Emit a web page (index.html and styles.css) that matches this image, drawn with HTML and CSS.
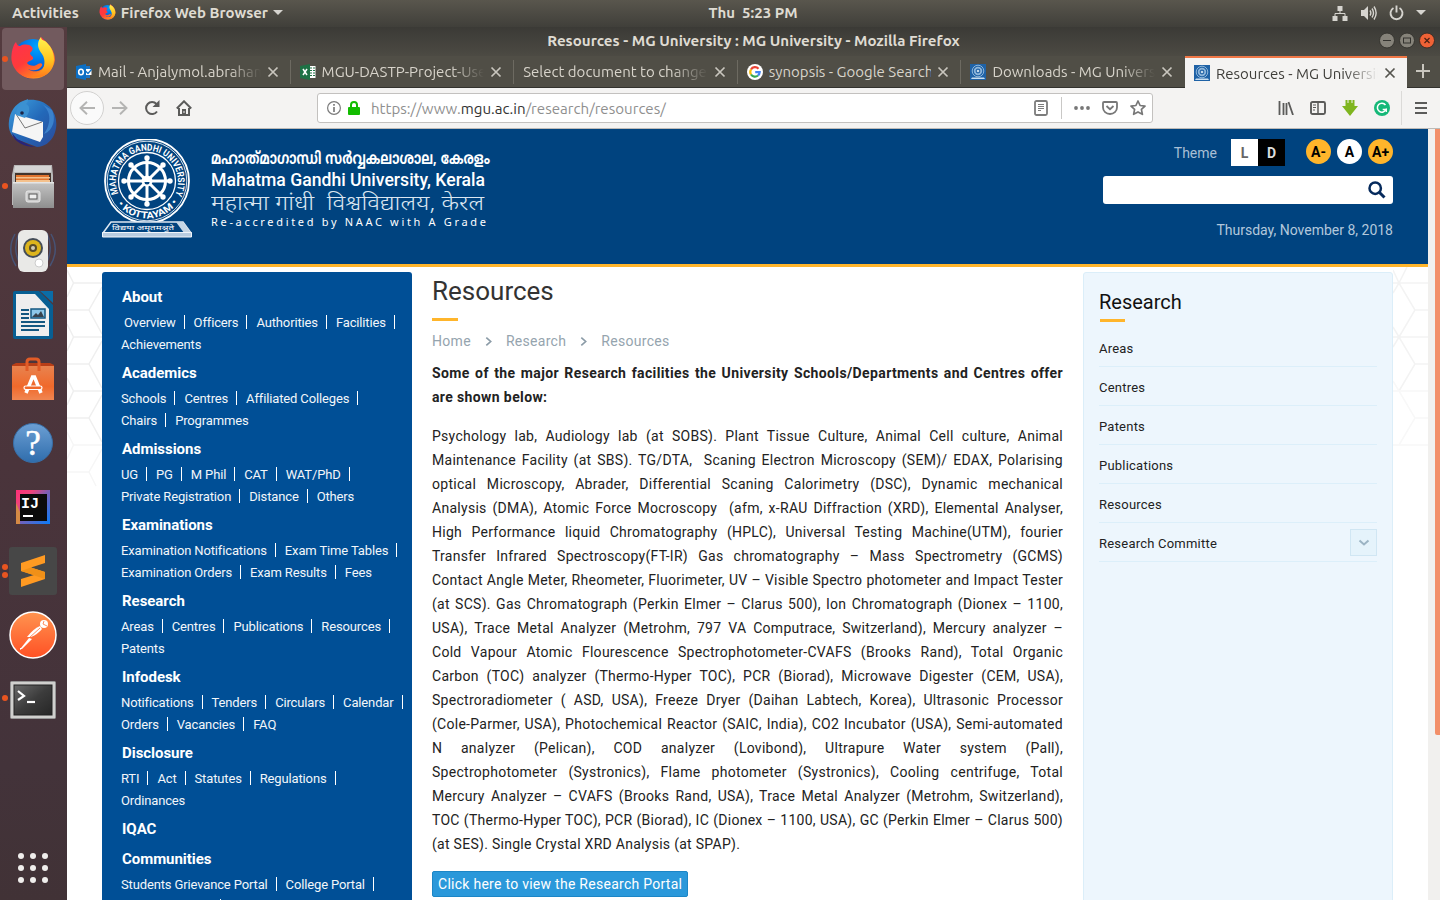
FILE: index.html
```html
<!DOCTYPE html>
<html lang="en">
<head>
<meta charset="utf-8">
<title>Resources - MG University : MG University</title>
<link rel="stylesheet" href="styles.css">
</head>
<body>
<svg class="defs" width="0" height="0">
  <defs>
    <linearGradient id="fxBody" x1="0" y1="0" x2="0.7" y2="1"><stop offset="0" stop-color="#ff2f52"/><stop offset=".55" stop-color="#ff3b3a"/><stop offset="1" stop-color="#ff9a1a"/></linearGradient>
    <linearGradient id="fxTail" x1="0" y1="0" x2="0" y2="1"><stop offset="0" stop-color="#fff44f"/><stop offset=".6" stop-color="#ffc21f"/><stop offset="1" stop-color="#ff7a1c"/></linearGradient>
    <radialGradient id="fxGlobe" cx=".6" cy=".2" r=".9"><stop offset="0" stop-color="#00a4ff"/><stop offset=".6" stop-color="#0060df"/><stop offset="1" stop-color="#1a2078"/></radialGradient>
    <linearGradient id="grey" x1="0" y1="0" x2="0" y2="1"><stop offset="0" stop-color="#c4c4c4"/><stop offset="1" stop-color="#8e8e8e"/></linearGradient>
    <linearGradient id="bag" x1="0" y1="0" x2="0" y2="1"><stop offset="0" stop-color="#e8834f"/><stop offset=".6" stop-color="#f0692b"/><stop offset="1" stop-color="#f08652"/></linearGradient>
    <linearGradient id="help" x1="0" y1="0" x2="0" y2="1"><stop offset="0" stop-color="#6c9fd4"/><stop offset="1" stop-color="#2f6dac"/></linearGradient>
    <linearGradient id="postman" x1="0" y1="0" x2="0" y2="1"><stop offset="0" stop-color="#ff9450"/><stop offset="1" stop-color="#ff5024"/></linearGradient>
    <linearGradient id="term" x1="0" y1="0" x2="1" y2="1"><stop offset="0" stop-color="#6a6a6a"/><stop offset=".5" stop-color="#3c3c3c"/><stop offset="1" stop-color="#262626"/></linearGradient>
    <linearGradient id="bird" x1="0" y1="0" x2="1" y2="1"><stop offset="0" stop-color="#3fa2e0"/><stop offset=".5" stop-color="#2368b8"/><stop offset="1" stop-color="#2a4a9a"/></linearGradient>
    <linearGradient id="ijg" x1="0" y1="0" x2="1" y2="1"><stop offset="0" stop-color="#fe2f78"/><stop offset=".25" stop-color="#f0437a"/><stop offset=".5" stop-color="#7b5fb5"/><stop offset="1" stop-color="#087cfa"/></linearGradient>
    <symbol id="firefox" viewBox="0 0 44 46">
      <circle cx="22" cy="23" r="20" fill="url(#fxGlobe)"/>
      <path d="M5 6c1 3 2 4 4 4 4-2 9-2 12 1 2 2-1 5-2 6 0 3 4 3 3 6-2 2-5 2-6 4 2 3 8 4 11 1 3-2 6 0 3 3-3 4-9 4-13 2 5 4 14 3 17-4 3-8 1-14-3-18-2-6-2-8-1-10 9 8 14 14 14 23A22 22 0 0 1 .5 24C0 17 2 9 5 6z" fill="url(#fxBody)"/>
      <path d="M30 1c-5 6-3 12 1 17 4 6 3 14-2 18-3 3-7 4-10 4 14 4 24-4 24-17 0-8-4-14-9-18-3-1-4-2-4-4z" fill="url(#fxTail)"/>
    </symbol>
    <symbol id="close" viewBox="0 0 12 12"><path d="M1.500 1.500l9 9M10.500 1.500l-9 9" fill="none" stroke="currentColor" stroke-width="1.700"/></symbol>
    <symbol id="mgu" viewBox="0 0 16 16"><rect width="16" height="16" fill="#1f62a6"/><g fill="none" stroke="#8db5da"><circle cx="8" cy="7" r="5.800"/><circle cx="8" cy="7" r="3.300" stroke-width="1.800"/></g><circle cx="8" cy="7" r="1.300" fill="#c3d8ea"/><path d="M2 13.500h12l1 1.500H1z" fill="#c9deef"/></symbol>
    <symbol id="chev" viewBox="0 0 8 12"><path d="M1.500 1.500L6.500 6l-5 4.500" fill="none" stroke="#8b9ba7" stroke-width="1.900"/></symbol>
  </defs>
</svg>

<div class="desktop">
  <header class="topbar">
    <div class="topbar-left">
      <span>Activities</span>
      <span class="app"><svg width="17" height="17"><use href="#firefox"/></svg><span class="app-name">Firefox Web Browser</span><i class="caret"></i></span>
    </div>
    <div class="clock">Thu&nbsp; 5:23 PM</div>
    <div class="tray">
      <svg width="16" height="16" viewBox="0 0 16 16"><path d="M5.500 1h5v5h-5zM.500 11h5v5h-5zM10.500 11h5v5h-5z" fill="#d6d4cf"/><path d="M8 6v2.500M3 11V8.500h10V11" fill="none" stroke="#d6d4cf"/></svg>
      <svg width="17" height="16" viewBox="0 0 17 16"><path d="M1 5h3l4-4v14l-4-4H1z" fill="#d6d4cf"/><g fill="none" stroke="#d6d4cf" stroke-width="1.400"><path d="M10 5.500q1.700 2.500 0 5M12 3.500q3 4.500 0 9M14 1.500q4.300 6.500 0 13"/></g></svg>
      <svg width="15" height="16" viewBox="0 0 15 16"><path d="M4.500 3a6 6 0 1 0 6 0M7.500.5v7" fill="none" stroke="#d6d4cf" stroke-width="1.900"/></svg>
      <i class="caret"></i>
    </div>
  </header>

  <div class="below">
    <nav class="dock">
      <div class="app-icon active run1"><svg width="44" height="46"><use href="#firefox"/></svg></div>
      <div class="app-icon"><svg width="50" height="48" viewBox="0 0 50 48"><path d="M15 2C23-1 35 1 42 8c7 8 8 19 4 28-3 7-10 12-17 12L8 40C2 36 0 29 1 22 2 13 7 5 15 2z" fill="url(#bird)"/><path d="M4 34l5 6 12 6 6 2c-9 0-21-4-23-14z" fill="#27247a"/><path d="M7 15l28 8 0 15-3 5L4 33z" fill="#f5f5f5"/><path d="M8 15l9 14 17-6" fill="none" stroke="#555" stroke-width=".8"/><path d="M8 16C8 7 14 2 20 0c0 3-1 4-2 5 5 2 4 9-1 14z" fill="#3b91d2"/><circle cx="14" cy="14" r="1.800" fill="#1c2547"/><path d="M34 5c10 8 9 20 2 30 10-4 12-16 8-24" fill="#3b82cc"/></svg></div>
      <div class="app-icon run1"><svg width="44" height="46" viewBox="0 0 44 46"><path d="M3 1h38l1 10v30H1V11z" fill="#b9b9b9"/><path d="M4 2h36v6H3z" fill="#d5d5d5"/><path d="M4 9h36v11H4z" fill="#43342c"/><path d="M5 11h33v8H5z" fill="#e0742f"/><path d="M5 13h34v1.500H5zM5 16h34v3H5z" fill="#f4c18d"/><path d="M2 18h41v26H2z" fill="url(#grey)"/><path d="M2 18h41v1.500H2z" fill="#e5e5e5"/><rect x="15" y="27" width="14" height="11" rx="2" fill="#ccc" stroke="#e8e8e8"/><rect x="18" y="30" width="8" height="5" fill="#eee" stroke="#555"/></svg></div>
      <div class="app-icon"><svg width="48" height="44" viewBox="0 0 48 44"><path d="M6 5Q-3 21 7 37M10 4Q3 20 11 35M42 5q9 16-1 32M38 4q7 16-1 31" fill="none" stroke="#475375" stroke-width="1.500"/><rect x="9" y="1" width="30" height="42" rx="6" fill="#e9e9e7"/><circle cx="24" cy="19" r="10" fill="#444d58"/><circle cx="24" cy="19" r="8" fill="#dcb41c"/><circle cx="24" cy="19" r="4" fill="#574b2a"/><circle cx="24" cy="19" r="2" fill="#d0cbb5"/><circle cx="30" cy="34" r="4" fill="#fff" stroke="#ccc"/></svg></div>
      <div class="app-icon"><svg width="42" height="50" viewBox="0 0 42 50"><path d="M3 1h24l14 14v32q0 2-2 2H3q-2 0-2-2V3q0-2 2-2z" fill="#075f93"/><path d="M4 4h19l14 15v27H4z" fill="#eee"/><path d="M28 1h13v12z" fill="#0b6da7"/><path d="M9 20h8M9 24h8M9 28h8M9 32h24M9 36h24M9 40h18" stroke="#135780" stroke-width="2"/><rect x="19" y="19" width="14" height="9" fill="#8dc7e8" stroke="#135780" stroke-width="1.500"/><path d="M20 27l4-4 2 2 3-4 3 6z" fill="#38434d"/></svg></div>
      <div class="app-icon"><svg width="44" height="44" viewBox="0 0 44 44"><path d="M1 8l4-2h34l4 2v4H1z" fill="#b83e17"/><path d="M1 9h42v34H1z" fill="url(#bag)"/><path d="M16 14V5q0-3 3-3h6q3 0 3 3v9" fill="none" stroke="#e25c27" stroke-width="3"/><path d="M15 36l6.500-16h2L30 36" fill="none" stroke="#fff" stroke-width="3.500"/><rect x="13" y="29" width="18" height="3.500" rx="1.700" fill="#f0692b" stroke="#fff" stroke-width="1.200"/></svg></div>
      <div class="app-icon"><svg width="42" height="42" viewBox="0 0 42 42"><circle cx="21" cy="21" r="19.500" fill="url(#help)" stroke="#386fa8"/><text x="21" y="33" text-anchor="middle" class="q">?</text></svg></div>
      <div class="app-icon"><svg width="34" height="34" viewBox="0 0 34 34"><rect width="34" height="34" fill="url(#ijg)"/><path d="M0 13l4 9v12H0z" fill="#d58a45"/><rect x="4" y="4" width="27" height="27" fill="#0b0b0b"/><text x="5" y="18" class="ij">IJ</text><path d="M7 25h10v2H7z" fill="#fff"/></svg></div>
      <div class="app-icon run2"><svg width="48" height="48" viewBox="0 0 48 48"><rect width="48" height="48" rx="3" fill="#474747"/><path d="M12 16l24-8v8l-14 4.500L36 25v7l-24 8v-8l13-4-13-4z" fill="#ff9a22"/><path d="M22 20.500L36 25v7L12 24z" fill="#f09018"/></svg></div>
      <div class="app-icon"><svg width="48" height="48" viewBox="0 0 48 48"><circle cx="24" cy="24" r="23" fill="url(#postman)" stroke="#fff" stroke-width="1.500"/><circle cx="35" cy="13" r="4" fill="#fff"/><path d="M31 15q-7 3-13 11l4 0q7-3 11-8z" fill="#fff"/><path d="M20 27l3 1-10 10-1-1zM11 37l3 0-3 2z" fill="#fff"/><path d="M31 17L20 27M35 10l-1 3 4 2" stroke="#ff7038" stroke-width=".8" fill="none"/></svg></div>
      <div class="app-icon run1 low"><svg width="46" height="38" viewBox="0 0 46 38"><rect x=".5" y=".5" width="45" height="37" rx="1" fill="#d0d0ce" stroke="#969696"/><rect x="4" y="4" width="38" height="30" fill="url(#term)" stroke="#222"/><path d="M8 10l6 5-6 4" fill="none" stroke="#fff" stroke-width="2.200"/><path d="M17 21h8" stroke="#fff" stroke-width="2.200"/></svg></div>
      <div class="apps-grid"><i></i><i></i><i></i><i></i><i></i><i></i><i></i><i></i><i></i></div>
    </nav>

    <section class="window">
      <div class="titlebar">
        <span class="title">Resources - MG University : MG University - Mozilla Firefox</span>
        <div class="wm">
          <svg width="16" height="17" viewBox="0 0 16 17"><circle cx="8" cy="8.500" r="7.500" fill="#86837a" stroke="#35342f"/><path d="M4 8.500h8" stroke="#33322e"/></svg>
          <svg width="16" height="17" viewBox="0 0 16 17"><circle cx="8" cy="8.500" r="7.500" fill="#86837a" stroke="#35342f"/><rect x="4.500" y="6" width="7" height="5" fill="none" stroke="#33322e"/></svg>
          <svg width="16" height="17" viewBox="0 0 16 17"><circle cx="8" cy="8.500" r="7.500" fill="#ef6236" stroke="#3b2d26"/><path d="M5.500 6l5 5m0-5l-5 5" stroke="#4a2114" stroke-width="1.200"/></svg>
        </div>
      </div>
      <div class="tabs">
        <div class="tab"><svg class="fav" width="16" height="16" viewBox="0 0 16 16"><path d="M5 2h9v12H5z" fill="#1b74c5"/><path d="M9 5h6.500v6H9z" fill="#fff"/><path d="M9.500 7l2.500 2.500L16 5" fill="none" stroke="#1072c6" stroke-width="1.400"/><path d="M0 2l10-2v16L0 14z" fill="#0b6fc4"/><ellipse cx="5" cy="8" rx="2.300" ry="2.800" fill="none" stroke="#fff" stroke-width="1.600"/></svg><span class="label">Mail - Anjalymol.abraham</span><svg class="x" width="12" height="12"><use href="#close"/></svg></div>
        <div class="tab"><svg class="fav" width="16" height="16" viewBox="0 0 16 16"><path d="M8 2h7.500v12H8z" fill="#fff"/><path d="M10 4h2m1 0h2M10 6.500h2m1 0h2M10 9h2m1 0h2M10 11.500h2m1 0h2" stroke="#207346" stroke-width="1.200"/><path d="M0 2l10-2v16L0 14z" fill="#1e7145"/><path d="M3 5l4 6M7 5l-4 6" stroke="#fff" stroke-width="1.500"/></svg><span class="label">MGU-DASTP-Project-User</span><svg class="x" width="12" height="12"><use href="#close"/></svg></div>
        <div class="tab"><span class="label">Select document to change |</span><svg class="x" width="12" height="12"><use href="#close"/></svg></div>
        <div class="tab"><svg class="fav" width="16" height="16" viewBox="0 0 16 16"><circle cx="8" cy="8" r="8" fill="#fff"/><g fill="none" stroke-width="2.200"><path d="M4 5.500A4.700 4.700 0 0 1 11.500 4.700" stroke="#ea4335"/><path d="M4 5.500a4.700 4.700 0 0 0 0 5" stroke="#fbbc05"/><path d="M4 10.500a4.700 4.700 0 0 0 7 1" stroke="#34a853"/><path d="M11 11.500a4.700 4.700 0 0 0 1.700-3.300H8.200" stroke="#4285f4"/></g></svg><span class="label whole">synopsis - Google Search</span><svg class="x" width="12" height="12"><use href="#close"/></svg></div>
        <div class="tab last"><svg class="fav" width="16" height="16"><use href="#mgu"/></svg><span class="label">Downloads - MG Universit</span><svg class="x" width="12" height="12"><use href="#close"/></svg></div>
        <div class="tab current"><svg class="fav" width="16" height="16"><use href="#mgu"/></svg><span class="label">Resources - MG Universit</span><svg class="x" width="12" height="12"><use href="#close"/></svg></div>
        <svg class="plus" width="14" height="14" viewBox="0 0 14 14"><path d="M7 0v14M0 7h14" stroke="#c9c6be" stroke-width="2"/></svg>
      </div>
      <div class="toolbar">
        <span class="back"><svg width="16" height="14" viewBox="0 0 16 14"><path d="M16 7H1.500M8 .8L1.500 7 8 13.200" fill="none" stroke="#b4b4b3" stroke-width="1.900"/></svg></span>
        <svg class="fwd" width="16" height="14" viewBox="0 0 16 14"><path d="M0 7h14.500M8 .8L14.500 7 8 13.200" fill="none" stroke="#b4b4b3" stroke-width="1.900"/></svg>
        <svg class="reload" width="16" height="16" viewBox="0 0 16 16"><path d="M13 11.500A6 6 0 1 1 12.500 4" fill="none" stroke="#5b5b5a" stroke-width="2"/><path d="M15.500 0v7h-7z" fill="#5b5b5a"/></svg>
        <svg class="home" width="16" height="16" viewBox="0 0 16 16"><path d="M.8 8.500L8 1.300l7.200 7.200M3 8v7h10V8" fill="none" stroke="#5b5b5a" stroke-width="2"/><path d="M6 9h4v6H6z" fill="#5b5b5a"/><path d="M7.500 11h1v2h-1z" fill="#eee"/></svg>
        <div class="urlbar">
          <svg width="14" height="14" viewBox="0 0 14 14"><circle cx="7" cy="7" r="6.400" fill="none" stroke="#7b7b7b" stroke-width="1.200"/><path d="M7 6v5M7 3v1.800" stroke="#7b7b7b" stroke-width="1.700"/></svg>
          <svg class="lock" width="12" height="14" viewBox="0 0 12 14"><path d="M3 7V4a3 3 0 0 1 6 0v3" fill="none" stroke="#12bc00" stroke-width="2"/><rect y="6" width="12" height="8" rx="1" fill="#12bc00"/></svg>
          <span class="url">https://www.<b>mgu.ac.in</b>/research/resources/</span>
          <span class="url-actions">
            <svg width="14" height="16" viewBox="0 0 14 16"><rect x="1" y="1" width="12" height="14" rx="1.500" fill="none" stroke="#7c7c7c" stroke-width="1.800"/><path d="M4 4.500h6M4 6.500h6M4 8.500h6M4 10.500h3" stroke="#7c7c7c"/></svg>
            <i class="vsep"></i>
            <svg width="16" height="4" viewBox="0 0 16 4"><g fill="#777"><circle cx="2" cy="2" r="1.900"/><circle cx="8" cy="2" r="1.900"/><circle cx="14" cy="2" r="1.900"/></g></svg>
            <svg class="pocket" width="16" height="14" viewBox="0 0 16 14"><path d="M2 1h12q1 0 1 1v4.500a7 6.500 0 0 1-14 0V2q0-1 1-1z" fill="none" stroke="#777" stroke-width="1.800"/><path d="M4.500 5L8 8.200 11.500 5" fill="none" stroke="#777" stroke-width="1.800"/></svg>
            <svg class="star" width="16" height="16" viewBox="0 0 16 16"><path d="M8 1l2.100 4.500 4.900.6-3.600 3.300 1 4.900L8 11.900l-4.400 2.400 1-4.900L1 6.100l4.900-.6z" fill="none" stroke="#777" stroke-width="1.700" stroke-linejoin="round"/></svg>
          </span>
        </div>
        <div class="tools">
          <svg width="16" height="14" viewBox="0 0 16 14"><path d="M1.500 0v14M5.500 2v12M8.500 2v12M10.500 1l4.500 13" fill="none" stroke="#5b5b5a" stroke-width="1.800"/></svg>
          <svg width="16" height="14" viewBox="0 0 16 14"><rect x="1" y="1" width="14" height="12" rx="1.500" fill="none" stroke="#5b5b5a" stroke-width="1.900"/><path d="M8 1v12" stroke="#5b5b5a" stroke-width="1.500"/><path d="M3 4h3M3 6.500h3M3 9h2" stroke="#5b5b5a"/></svg>
          <svg width="16" height="16" viewBox="0 0 16 16"><path d="M3.500 0h2v3h1V0h3v3h1V0h2v6H16l-8 10L0 6h3.500z" fill="#7fb51f"/></svg>
          <svg width="16" height="16" viewBox="0 0 16 16"><circle cx="8" cy="8" r="8" fill="#15b878"/><path d="M11.500 5A4.500 4.500 0 1 0 12 9.500H8.700" fill="none" stroke="#fff" stroke-width="1.500"/><path d="M12.300 8.500v3.500" stroke="#fff" stroke-width="1.300"/></svg>
        </div>
        <span class="menu"><i></i><i></i><i></i></span>
      </div>

      <div class="viewport">
        <div class="page">
          <header class="site-head">
            <div class="brand">
              <svg class="emblem" width="90" height="99" viewBox="0 0 90 99">
                <defs><path id="arcTop" d="M16.800 55.500A31 31 0 1 1 73.200 55.500"/><path id="arcBot" d="M10.500 57A37.700 37.700 0 0 0 79.500 57"/></defs>
                <circle cx="45" cy="42" r="42" fill="none" stroke="#fff" stroke-width="1.800"/>
                <circle cx="45" cy="42" r="39.800" fill="none" stroke="#d3dfeb" stroke-width="1"/>
                <circle cx="45" cy="42" r="28.500" fill="none" stroke="#fff" stroke-width="1.300"/>
                <text class="ring"><textPath href="#arcTop" textLength="123" startOffset="1" lengthAdjust="spacingAndGlyphs">MAHATMA GANDHI UNIVERSITY</textPath></text>
                <text class="ring"><textPath href="#arcBot" textLength="70" startOffset="9.500" lengthAdjust="spacingAndGlyphs">• KOTTAYAM •</textPath></text>
                <g stroke="#fff" fill="none"><circle cx="45" cy="42" r="18.500" stroke-width="3"/><path d="M45 18v48M21 42h48M28 25l34 34M62 25L28 59" stroke-width="3"/></g>
                <g fill="#fff"><circle cx="45" cy="19" r="2.700"/><circle cx="45" cy="65" r="2.700"/><circle cx="22" cy="42" r="2.700"/><circle cx="68" cy="42" r="2.700"/><circle cx="29" cy="26" r="2.700"/><circle cx="61" cy="26" r="2.700"/><circle cx="29" cy="58" r="2.700"/><circle cx="61" cy="58" r="2.700"/><circle cx="45" cy="42" r="5.500"/></g>
                <path d="M42.500 43a2.500 2.500 0 0 0 5 0z" fill="#00437f"/>
                <path d="M9 83h72l8 11H1z" fill="#00437f" stroke="#dde8f2" stroke-width="1.500"/><path d="M74 83h7l8 11h-7z" fill="#c6d6e6"/>
                <path d="M.5 93.500h89V98H.5z" fill="#b8cce0" stroke="#f0f5fa" stroke-width="1"/>
                <text x="10" y="90.500" class="motto" textLength="62" lengthAdjust="spacingAndGlyphs">विद्यया अमृतमश्नुते</text>
              </svg>
              <svg class="wordmark" width="300" height="92" viewBox="0 0 300 92">
                <text x="0" y="25" class="ml" textLength="279" lengthAdjust="spacingAndGlyphs">മഹാത്&zwnj;മാഗാന്ധി സർവ്വകലാശാല, കേരളം</text>
                <text x="0" y="47" class="en" textLength="274" lengthAdjust="spacingAndGlyphs">Mahatma Gandhi University, Kerala</text>
                <text x="0" y="71" class="hi" textLength="273" lengthAdjust="spacingAndGlyphs" xml:space="preserve">महात्मा गांधी  विश्वविद्यालय, केरल</text>
                <text x="0" y="87" class="naac" textLength="275">Re-accredited by NAAC with A Grade</text>
              </svg>
            </div>
            <div class="head-tools">
              <div class="theme-row"><span class="theme">Theme</span><span class="sw light">L</span><span class="sw dark">D</span><span class="rnd">A-</span><span class="rnd white">A</span><span class="rnd">A+</span></div>
              <div class="search"><svg width="18" height="18" viewBox="0 0 18 18"><circle cx="7.200" cy="7.200" r="5.700" fill="none" stroke="#062a5c" stroke-width="2.500"/><path d="M11.500 11.500l5 5" stroke="#062a5c" stroke-width="3"/></svg></div>
              <div class="date">Thursday, November 8, 2018</div>
            </div>
          </header>

          <div class="columns">
            <svg class="gutter" width="35" height="240" viewBox="0 0 35 240"><g fill="none" stroke="#efefef" stroke-width="1.500"><path d="M0 3l6.500 13L0 30M6.500 16H35M0 43h22M35 20L22 43l13 24M0 57l6.500 13L0 84M6.500 70H35M0 97h22M35 74L22 97l13 24M0 111l6.500 13L0 138M6.500 124H35M0 151h22M35 128l-13 23 13 24"/><path stroke="#f6f6f6" d="M0 165l6.500 13L0 192M6.500 178H35M0 205h22M35 182l-13 23 7 14"/></g></svg>
            <aside class="left">
              <h3>About</h3>
              <div class="links"><p class="ind"><a>Overview</a><a>Officers</a><a>Authorities</a><a>Facilities</a></p><p><a>Achievements</a></p></div>
              <h3>Academics</h3>
              <div class="links"><p><a>Schools</a><a>Centres</a><a>Affiliated Colleges</a></p><p><a>Chairs</a><a>Programmes</a></p></div>
              <h3>Admissions</h3>
              <div class="links"><p><a>UG</a><a>PG</a><a>M Phil</a><a>CAT</a><a>WAT/PhD</a></p><p><a>Private Registration</a><a>Distance</a><a>Others</a></p></div>
              <h3>Examinations</h3>
              <div class="links"><p><a>Examination Notifications</a><a>Exam Time Tables</a></p><p><a>Examination Orders</a><a>Exam Results</a><a>Fees</a></p></div>
              <h3>Research</h3>
              <div class="links"><p><a>Areas</a><a>Centres</a><a>Publications</a><a>Resources</a></p><p><a>Patents</a></p></div>
              <h3>Infodesk</h3>
              <div class="links"><p><a>Notifications</a><a>Tenders</a><a>Circulars</a><a>Calendar</a></p><p><a>Orders</a><a>Vacancies</a><a>FAQ</a></p></div>
              <h3>Disclosure</h3>
              <div class="links"><p><a>RTI</a><a>Act</a><a>Statutes</a><a>Regulations</a></p><p><a>Ordinances</a></p></div>
              <h3>IQAC</h3>
              <h3>Communities</h3>
              <div class="links"><p><a>Students Grievance Portal</a><a>College Portal</a></p><p><a class="blank"></a></p><p></p></div>
            </aside>
            <main class="main">
              <h1>Resources</h1>
              <i class="rule"></i>
              <div class="crumbs"><span>Home</span><svg width="7" height="11"><use href="#chev"/></svg><span>Research</span><svg width="7" height="11"><use href="#chev"/></svg><span>Resources</span></div>
              <div class="para lead"><p>Some of the major Research facilities the University Schools/Departments and Centres offer</p><p class="end">are shown below:</p></div>
              <div class="para">
                <p>Psychology lab, Audiology lab (at SOBS). Plant Tissue Culture, Animal Cell culture, Animal</p>
                <p>Maintenance Facility (at SBS). TG/DTA,&nbsp; Scaning Electron Microscopy (SEM)/ EDAX, Polarising</p>
                <p>optical Microscopy, Abrader, Differential Scaning Calorimetry (DSC), Dynamic mechanical</p>
                <p>Analysis (DMA), Atomic Force Mocroscopy&nbsp; (afm, x-RAU Diffraction (XRD), Elemental Analyser,</p>
                <p>High Performance liquid Chromatography (HPLC), Universal Testing Machine(UTM), fourier</p>
                <p>Transfer Infrared Spectroscopy(FT-IR) Gas chromatography – Mass Spectrometry (GCMS)</p>
                <p class="tight">Contact Angle Meter, Rheometer, Fluorimeter, UV – Visible Spectro photometer and Impact Tester</p>
                <p>(at SCS). Gas Chromatograph (Perkin Elmer – Clarus 500), Ion Chromatograph (Dionex – 1100,</p>
                <p>USA), Trace Metal Analyzer (Metrohm, 797 VA Computrace, Switzerland), Mercury analyzer –</p>
                <p>Cold Vapour Atomic Flourescence Spectrophotometer-CVAFS (Brooks Rand), Total Organic</p>
                <p>Carbon (TOC) analyzer (Thermo-Hyper TOC), PCR (Biorad), Microwave Digester (CEM, USA),</p>
                <p>Spectroradiometer ( ASD, USA), Freeze Dryer (Daihan Labtech, Korea), Ultrasonic Processor</p>
                <p>(Cole-Parmer, USA), Photochemical Reactor (SAIC, India), CO2 Incubator (USA), Semi-automated</p>
                <p>N analyzer (Pelican), COD analyzer (Lovibond), Ultrapure Water system (Pall),</p>
                <p>Spectrophotometer (Systronics), Flame photometer (Systronics), Cooling centrifuge, Total</p>
                <p>Mercury Analyzer – CVAFS (Brooks Rand, USA), Trace Metal Analyzer (Metrohm, Switzerland),</p>
                <p>TOC (Thermo-Hyper TOC), PCR (Biorad), IC (Dionex – 1100, USA), GC (Perkin Elmer – Clarus 500)</p>
                <p class="end">(at SES). Single Crystal XRD Analysis (at SPAP).</p>
              </div>
              <a class="btn">Click here to view the Research Portal</a>
            </main>
            <aside class="right">
              <h2>Research</h2>
              <i class="rule"></i>
              <ul><li>Areas</li><li>Centres</li><li>Patents</li><li>Publications</li><li>Resources</li><li>Research Committe<span class="toggle"><svg width="12" height="8" viewBox="0 0 12 8"><path d="M1.500 1.500L6 5.500l4.500-4" fill="none" stroke="#9cb4c4" stroke-width="2"/></svg></span></li></ul>
            </aside>
            <svg class="gutter" width="35" height="240" viewBox="0 0 35 240"><g fill="none" stroke="#f3f3f3" stroke-width="1.500"><path d="M0 16h35M0 3l6 13 8-16M0 26l6-10 16 27L6 70M22 43h13M0 70h35M0 80l6-10 16 27-16 27M22 97h13M0 60l6 10"/><path stroke="#f8f8f8" d="M0 124h35M0 114l6 10 16 27-16 27M22 151h13M0 178h35"/></g></svg>
          </div>
        </div>
        <div class="scroll"><i></i></div>
      </div>
    </section>
  </div>
</div>
</body>
</html>
```

FILE: styles.css
```css
* { box-sizing: border-box; }
body { margin: 0; font-family: Roboto, "Liberation Sans", sans-serif; overflow: hidden; }
h1, h2, h3, p, ul { margin: 0; padding: 0; }
svg { display: block; flex: none; }
i { display: block; flex: none; }
.defs { position: absolute; }

.desktop { width: 1440px; height: 900px; display: flex; flex-direction: column; overflow: hidden; }
.topbar, .titlebar, .tabs, .url { font-family: Ubuntu, "Noto Sans", "Open Sans", sans-serif; }

/* system bar */
.topbar { height: 27px; flex: none; display: grid; grid-template-columns: 703px 100px 1fr; align-items: center; background: linear-gradient(#59564d, #403f3a); color: #dfdbd2; font-size: 15px; font-weight: 600; padding-bottom: 2px; }
.topbar-left { display: flex; align-items: center; padding-left: 12px; gap: 20px; }
.app { display: flex; align-items: center; gap: 5px; }
.caret { border: 5px solid transparent; border-top-color: #d6d4cf; border-bottom: 0; }
.clock { text-align: center; white-space: nowrap; }
.tray { display: flex; align-items: center; justify-content: flex-end; gap: 12px; padding-right: 14px; }

.below { flex: 1; display: flex; min-height: 0; }

/* dock */
.dock { width: 67px; flex: none; position: relative; background: linear-gradient(#543b3f, #4a343b 50%, #43333a 85%, #413236); padding-top: 1px; }
.app-icon { height: 64px; margin-left: 2px; width: 62px; display: flex; align-items: center; justify-content: center; position: relative; }
.app-icon.active { height: 62px; background: #725a5e; border-radius: 4px; margin-bottom: 1px; }
.app-icon.low { padding-top: 2px; }
.run1::before, .run2::before { content: ""; position: absolute; left: 0; top: 28px; width: 6px; height: 6px; border-radius: 50%; background: #e95420; }
.run2::before { box-shadow: 0 8px #e95420; top: 25px; }
.q { font: 35px "Liberation Serif", serif; fill: #fff; stroke: #fff; stroke-width: .5px; }
.ij { font: bold 15px "Liberation Mono", monospace; fill: #fff; }
.apps-grid { position: absolute; left: 18px; bottom: 17px; display: grid; grid-template-columns: repeat(3, 6px); gap: 6px; }
.apps-grid i { width: 6px; height: 6px; border-radius: 50%; background: #f0eeec; }

/* browser chrome */
.window { flex: 1; min-width: 0; display: flex; flex-direction: column; }
.titlebar { height: 29px; flex: none; position: relative; display: flex; align-items: center; justify-content: center; background: linear-gradient(#3b3a36, #4c4a43); color: #dfdbd2; font-size: 15.100px; font-weight: 600; white-space: nowrap; padding-bottom: 2px; }
.wm { position: absolute; right: 5px; top: 5px; display: flex; gap: 4px; }
.tabs { height: 32px; flex: none; display: flex; background: #504e46; border-bottom: 1px solid #33322e; color: #d8d4cb; font-size: 15px; }
.tab { width: 223.600px; flex: none; display: flex; align-items: center; padding-left: 9px; position: relative; }
.tab:not(.last):not(.current)::after { content: ""; position: absolute; right: 0; top: 4px; bottom: 3px; width: 1px; background: #6d6a61; }
.tab .fav { margin-right: 6px; }
.label { flex: 1; white-space: nowrap; overflow: hidden; -webkit-mask: linear-gradient(to right, #000 80%, transparent); }
.tab .x { margin: 0 12px 0 6px; color: #c9c6be; }
.label.whole { -webkit-mask: none; }
.tab.current { width: 222.200px; height: 32px; background: #f4f3f2; color: #3f3e3a; border-top: 2px solid #f07746; }
.tab.current .x { color: #55544f; margin-right: 11px; }
.plus { margin: 8px 0 0 9px; }
.toolbar { height: 41px; flex: none; display: flex; align-items: center; background: #f4f3f2; border-bottom: 1px solid #bdbab7; padding-left: 3px; }
.back { width: 34px; height: 34px; border-radius: 50%; border: 1px solid #d2d1d0; background: #fafafa; display: flex; align-items: center; justify-content: center; }
.fwd { margin-left: 8px; }
.reload { margin-left: 16px; }
.home { margin-left: 16px; }
.urlbar { margin-left: 125px; width: 836px; height: 30px; border: 1px solid #c3c1bf; border-radius: 3px; background: #fff; display: flex; align-items: center; padding-left: 9px; }
.lock { margin: 0 11px 0 7px; }
.url { font-size: 15.100px; color: #8f8f8f; flex: 1; }
.url b { font-weight: 400; color: #333; }
.url-actions { display: flex; align-items: center; padding-right: 6px; }
.vsep { width: 1px; height: 22px; background: #c9c8c6; margin: 0 12px 0 13px; }
.pocket { margin: 0 12px; }
.tools { display: flex; align-items: center; gap: 16px; margin-left: 125px; }
.menu { margin-left: 11px; height: 34px; border-left: 1px solid #dbdad8; padding: 11px 0 0 13px; display: flex; flex-direction: column; gap: 3px; }
.menu i { width: 12px; height: 2px; background: #5b5b5a; }

/* page */
.viewport { flex: 1; min-height: 0; display: flex; }
.page { width: 1361px; overflow: hidden; background: #fff; }
.scroll { width: 12px; background: #f1f0ee; padding-left: 7px; }
.scroll i { height: 606px; background: #f28f69; border-radius: 0 0 0 2px; }
.site-head { height: 138px; background: #00437f; border-bottom: 3px solid #ffb52b; padding: 10px 35px 0; display: flex; justify-content: space-between; }
.brand { display: flex; gap: 19px; }
.ring { font: bold 9.500px Roboto, sans-serif; fill: #fff; }
.motto { font: 7px "Noto Sans", "Noto Sans Devanagari", sans-serif; fill: #fff; }
.ml { font: bold 16.500px "Noto Sans Malayalam", "Noto Sans", sans-serif; fill: #fff; }
.en { font: 500 18px Roboto, sans-serif; fill: #fff; }
.hi { font: 300 20px "Noto Sans Devanagari", "Noto Sans", sans-serif; fill: #dbe6f1; }
.naac { font: 11px "Noto Sans", sans-serif; fill: #fff; }
.head-tools { width: 290px; }
.theme-row { height: 27px; display: flex; align-items: center; justify-content: flex-end; font-size: 14px; }
.theme { color: #a9bfd5; margin-right: 14px; }
.sw { width: 27px; height: 27px; line-height: 28px; text-align: center; font-weight: 700; }
.light { background: #fff; color: #666; }
.dark { background: #000; color: #ddd; margin-right: 21px; }
.rnd { width: 25px; height: 25px; line-height: 26px; margin-top: -2px; border-radius: 50%; background: #ffb52b; color: #000; text-align: center; font-weight: 700; }
.rnd.white { background: #fff; margin-left: 6px; margin-right: 6px; }
.search { height: 28px; margin-top: 10px; border-radius: 3px; background: #fff; display: flex; align-items: center; justify-content: flex-end; padding-right: 7px; }
.date { margin-top: 18px; line-height: 16px; text-align: right; font-size: 14px; color: #b3c8dc; }

.columns { display: grid; grid-template-columns: 35px 310px 671px 310px 35px; height: 640px; }
.left { margin-top: 5px; background: #004f96; border-radius: 3px 3px 0 0; padding: 10px 0 0 19px; color: #f2f6fa; }
.left h3 { font-size: 15px; font-weight: 700; line-height: 30px; padding-left: 1px; color: #fff; letter-spacing: -.04px; }
.links { margin-top: -1px; margin-bottom: 3px; letter-spacing: -.14px; }
.links p { display: flex; height: 22px; align-items: center; font-size: 13px; white-space: nowrap; }
.links .ind { padding-left: 3px; }
.links a { display: flex; align-items: center; }
.links a::after { content: ""; width: 1px; height: 14px; background: #fff; margin: 0 9px 0 8px; }
.links p:last-child a:last-child::after { display: none; }
.links .blank { padding-left: 91px; }

.main { padding: 5px 20px 0; color: #222; }
.main h1 { font-size: 26px; font-weight: 400; line-height: 38px; color: #333; }
.rule { width: 26px; height: 3px; background: #ffb52b; }
.main .rule { margin-top: 8px; }
.crumbs { display: flex; align-items: center; height: 24px; margin-top: 8px; font-size: 14px; letter-spacing: .3px; color: #95a4ae; gap: 14px; }
.para { font-size: 14px; letter-spacing: .28px; line-height: 24px; margin-top: 15px; }
.para.lead { margin-top: 8px; font-weight: 700; letter-spacing: .38px; }
.para p { text-align: justify; text-align-last: justify; white-space: nowrap; }
.para .end { text-align-last: left; }
.para .tight { letter-spacing: .26px; }
.btn { display: inline-block; margin-top: 15px; height: 26px; line-height: 24px; padding: 0 5px; background: #2a98da; border: 1px solid #1c86c6; border-radius: 2px; color: #fff; font-size: 14px; letter-spacing: .27px; white-space: nowrap; }

.right { margin-top: 5px; background: #edf6fd; border: 1px solid #dbeef9; border-radius: 3px 3px 0 0; padding: 15px 15px 0 15px; }
.right h2 { font-size: 20px; font-weight: 400; line-height: 28px; color: #111; }
.right .rule { width: 25px; margin: 3px 0 6px 1px; }
.right ul { list-style: none; }
.right li { height: 39px; border-bottom: 1px solid #dceffa; display: flex; align-items: center; justify-content: space-between; font-size: 13px; letter-spacing: .22px; color: #222; padding-top: 2px; }
.toggle { width: 27px; height: 27px; margin-top: -1px; background: #e5f3fb; border: 1px solid #d0e6f3; display: flex; align-items: center; justify-content: center; }
```
